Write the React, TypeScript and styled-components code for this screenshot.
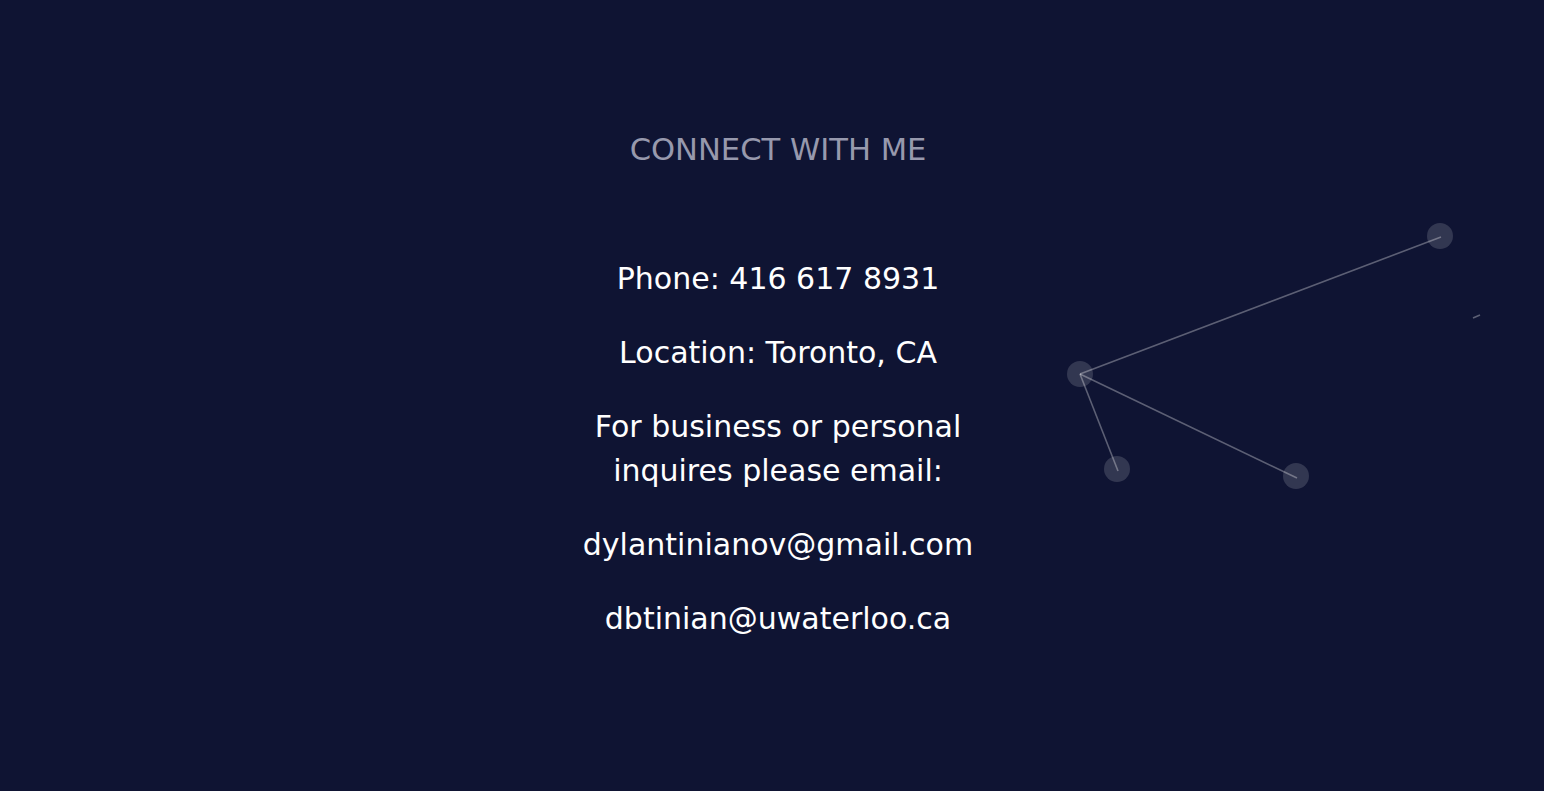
import React from "react";
import styled, { createGlobalStyle } from "styled-components";

const Global = createGlobalStyle`
  html, body { margin: 0; padding: 0; background: #0f1433; }
  body { font-family: "DejaVu Sans", Verdana, sans-serif; }
`;

const Page = styled.div`
  position: relative;
  width: 100%;
  height: 791px;
  background: #0f1433;
  overflow: hidden;
`;

const Network = styled.svg`
  position: absolute;
  inset: 0;
  width: 100%;
  height: 100%;
  pointer-events: none;
`;

const Content = styled.main`
  position: relative;
  display: flex;
  flex-direction: column;
  align-items: center;
  padding: 132px 0 0 12px;
`;

const Heading = styled.h2`
  margin: 0 0 89px;
  font-size: 30.6px;
  font-weight: 400;
  line-height: 36px;
  color: #9799ad;
`;

const Info = styled.p`
  margin: 0 0 30px;
  font-size: 30px;
  line-height: 44px;
  color: #ffffff;
  text-align: center;
  max-width: 440px;
`;

const nodes = [
  { x: 1440, y: 236 },
  { x: 1080, y: 374 },
  { x: 1117, y: 469 },
  { x: 1296, y: 476 },
];

const edges: [number, number, number, number][] = [
  [1080, 374, 1441, 237],
  [1080, 374, 1118, 471],
  [1080, 374, 1297, 478],
  [1473, 318, 1480, 315],
];

export default function App() {
  return (
    <Page>
      <Global />
      <Network viewBox="0 0 1544 791" preserveAspectRatio="none">
        {edges.map(([x1, y1, x2, y2], i) => (
          <line key={i} x1={x1} y1={y1} x2={x2} y2={y2} stroke="rgba(255,255,255,0.32)" strokeWidth={1.6} />
        ))}
        {nodes.map((n, i) => (
          <circle key={i} cx={n.x} cy={n.y} r={13} fill="rgba(255,255,255,0.15)" />
        ))}
      </Network>
      <Content>
        <Heading>CONNECT WITH ME</Heading>
        <Info>Phone: 416 617 8931</Info>
        <Info>Location: Toronto, CA</Info>
        <Info>
          For business or personal
          <br />
          inquires please email:
        </Info>
        <Info>dylantinianov@gmail.com</Info>
        <Info>dbtinian@uwaterloo.ca</Info>
      </Content>
    </Page>
  );
}
